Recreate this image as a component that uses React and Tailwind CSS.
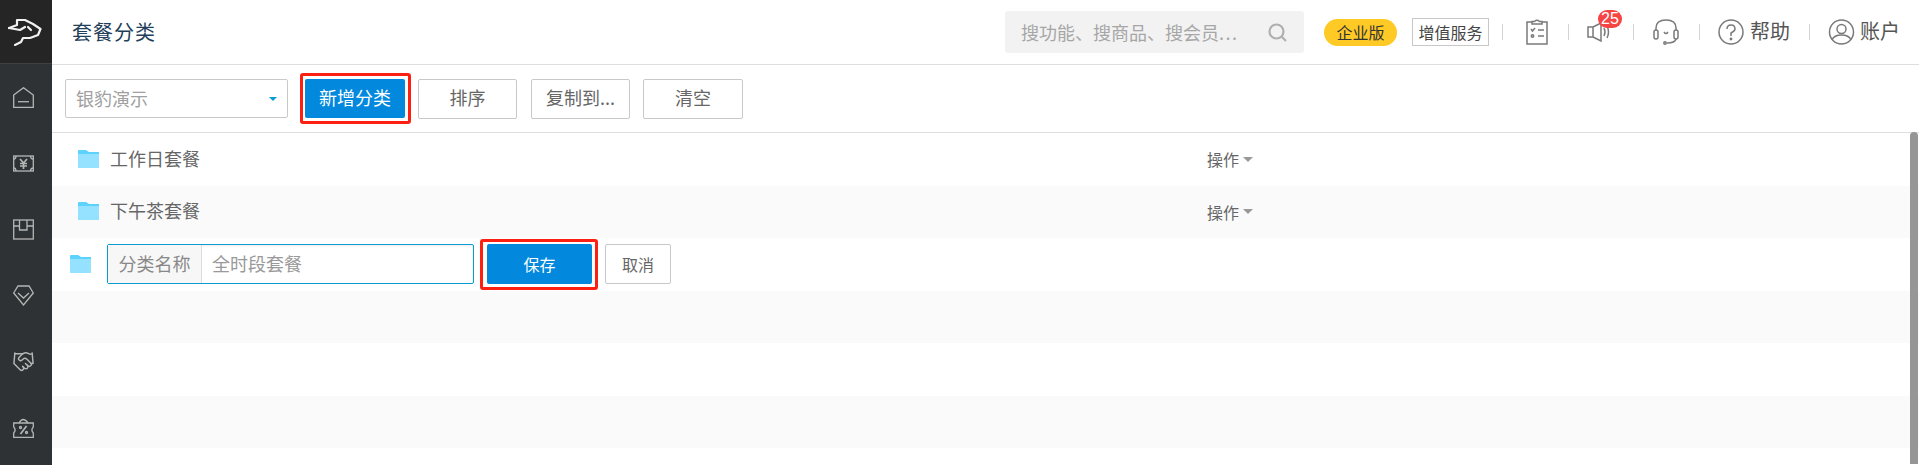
import { Handshake } from 'lucide-react'

const CJK = "font-['Noto_Sans_CJK_SC','Liberation_Sans',sans-serif]"

function Logo() {
  return (
    <svg width="34" height="28" viewBox="0 0 34 28" fill="none" stroke="#f2f2f2" strokeWidth="2.2" strokeLinejoin="round" strokeLinecap="round">
      <path d="M1 10 L9 7 L9 2 L17 2 L25 6 L32.5 11 L30 17 L22 20 L15 20 L13 24 L7 27" />
      <path d="M1 10 L12 12 L17 9" />
      <path d="M20 9 L23 12" />
    </svg>
  )
}

const NAV_ICONS = [
  <g key="home"><path d="M0.7 8 L10.5 0.7 L20.3 8 V20.3 H0.7 Z" /><path d="M5 14.7 H16" /></g>,
  <g key="cash"><rect x="0.7" y="3" width="19.6" height="15" /><path d="M0.7 6 Q3 6 3 3 M17.5 3 Q17.5 6 20.3 6 M0.7 15 Q3 15 3 18 M17.5 18 Q17.5 15 20.3 15" /><path d="M7 6 L10.5 10 L14 6 M7 10.5 H14 M7 13 H14 M10.5 10 V16" strokeWidth="1.7" /></g>,
  <g key="box"><rect x="0.7" y="1" width="19.6" height="19" /><path d="M0.7 7 H6.5 V11 H14 V7 H20.3 M6.5 1 V7 M14 1 V7" /></g>,
  <g key="gem"><path d="M5 1 H16 L20.3 8 L10.5 20 L0.7 8 Z" /><path d="M5 8 L10.5 13 L16 8" /></g>,
  <Handshake key="deal" x="-1" y="-1" width="23" height="23" stroke="#b4b6b6" strokeWidth="1.5" />,
  <g key="coupon"><path d="M0.7 6 H20.3 V10 Q17.5 13 20.3 16 V20.5 H0.7 V16 Q3.5 13 0.7 10 Z" /><path d="M6 6 Q10 -1 15 6" /><path d="M7.5 17 L13.5 9" strokeWidth="1.7" /><circle cx="7.5" cy="10.5" r="1" /><circle cx="13.5" cy="15.5" r="1" /></g>,
]

function Sidebar() {
  return (
    <aside className="w-[52px] shrink-0 bg-[#2f3234] flex flex-col">
      <div className="h-[64px] bg-[#252525] border-b border-[#3d3f40] flex items-center justify-center pr-[2px]">
        <Logo />
      </div>
      <div className="flex flex-col">
        {NAV_ICONS.map((icon, i) => (
          <div key={i} className="h-[66px] flex items-center justify-center pr-[5px]">
            <svg width="21" height="21" viewBox="0 0 21 21" fill="none" stroke="#b4b6b6" strokeWidth="1.3">{icon}</svg>
          </div>
        ))}
      </div>
    </aside>
  )
}

function Sep({ className = '' }) {
  return <span className={`w-px h-4 bg-[#d4d4d4] ${className}`} />
}

function TopBar() {
  return (
    <header className="h-[65px] shrink-0 border-b border-[#dedede] flex items-center pl-[20px] pr-[19px]">
      <h1 className="text-[20px] text-[#1f3f5a] font-normal tracking-[1px]">套餐分类</h1>
      <div className="ml-auto w-[299px] h-[42px] bg-[#f2f2f2] rounded-[3px] flex items-center pl-4 pr-[17px] text-[18px] text-[#a6a6a6]">
        <span className="flex-1">搜功能、搜商品、搜会员<span className="tracking-[1.5px]">...</span></span>
        <svg width="19" height="19" viewBox="0 0 19 19" fill="none" stroke="#b0b0b0" strokeWidth="2.2">
          <circle cx="8.5" cy="8.5" r="7" />
          <path d="M13.5 13.5 L18 18" />
        </svg>
      </div>
      <span className="ml-[20px] w-[73px] h-[27px] rounded-full bg-[#ffc926] text-[16px] text-[#333] flex items-center justify-center">企业版</span>
      <span className="ml-[15px] w-[77px] h-[28px] border border-[#c8c8c8] text-[16px] text-[#444] flex items-center justify-center">增值服务</span>
      <Sep className="ml-[13px]" />
      <svg className="ml-[23px]" width="22" height="26" viewBox="0 0 22 26" fill="none" stroke="#7a7a7a" strokeWidth="1.5">
        <path d="M6 3 H1 V25 H21 V3 H16" />
        <path d="M6 5 V2.5 H8.5 Q11 0 13.5 2.5 H16 V5 Z" />
        <path d="M5 10 L6.5 12 L9 9 M12 11 H18 M12 17 H18" />
        <circle cx="6.5" cy="17" r="1.2" />
      </svg>
      <Sep className="ml-[20px]" />
      <div className="relative ml-[18px] w-[26px] h-[26px] flex items-center">
        <svg width="26" height="20" viewBox="0 0 26 20" fill="none" stroke="#7a7a7a" strokeWidth="1.5">
          <path d="M1 5 H6 V15 H1 Z M6 5 L14 1 V19 L6 15" />
          <path d="M17 6 Q19 10 17 14 M20 4 Q23 10 20 16" />
        </svg>
        <span className="absolute left-[11px] -top-[9px] w-[24px] h-[18px] rounded-full bg-[#f64343] text-white text-[16px] leading-[18px] text-center font-['Liberation_Sans']">25</span>
      </div>
      <Sep className="ml-[20px]" />
      <svg className="ml-[19px]" width="26" height="26" viewBox="0 0 26 26" fill="none" stroke="#7a7a7a" strokeWidth="1.5">
        <path d="M3 11 V9 Q3 1 13 1 Q23 1 23 9 V11" />
        <rect x="1" y="11" width="4" height="9" rx="2" />
        <rect x="21" y="11" width="4" height="9" rx="2" />
        <path d="M23 20 Q22 24 14 24" />
        <path d="M11 13 Q13 16 15 13" />
        <circle cx="12" cy="24" r="1.2" />
      </svg>
      <Sep className="ml-[20px]" />
      <svg className="ml-[18px]" width="26" height="26" viewBox="0 0 26 26" fill="none" stroke="#7a7a7a" strokeWidth="1.5">
        <circle cx="13" cy="13" r="12" />
        <path d="M9 10 Q9 6 13 6 Q17 6 17 10 Q17 12 13 14 V17" />
        <circle cx="13" cy="20" r="0.7" />
      </svg>
      <span className="ml-[6px] -mt-[3px] text-[20px] text-[#555]">帮助</span>
      <Sep className="ml-[19px]" />
      <svg className="ml-[18px]" width="27" height="26" viewBox="0 0 27 26" fill="none" stroke="#7a7a7a" strokeWidth="1.5">
        <circle cx="13.5" cy="13" r="12" />
        <circle cx="13.5" cy="10" r="4.5" />
        <path d="M4 21 Q6 16 13.5 16 Q21 16 23 21" />
      </svg>
      <span className="ml-[5px] -mt-[3px] text-[20px] text-[#555]">账户</span>
    </header>
  )
}

function OutlineBtn({ children, className = '' }) {
  return (
    <button className={`h-[40px] pb-[2px] border border-[#c9c9c9] rounded-[2px] bg-white text-[18px] text-[#666] ${className}`}>
      {children}
    </button>
  )
}

function Toolbar() {
  return (
    <div className="h-[68px] shrink-0 border-b border-[#dedede] flex items-center pl-[13px]">
      <div className="w-[223px] h-[39px] border border-[#c9c9c9] rounded-[2px] flex items-center justify-between pl-[10px] pr-[10px] text-[18px] text-[#a0a0a0]">
        <span>银豹演示</span>
        <span className="w-0 h-0 border-x-[4px] border-x-transparent border-t-[4px] border-t-[#0b9bd3]" />
      </div>
      <div className="ml-[12px] w-[111px] h-[51px] border-[3px] border-[#fb2012] rounded-[3px] flex items-center pl-[2px]">
        <button className="block w-[100px] h-[39px] pb-[2px] rounded-[2px] bg-[#0288dd] text-white text-[18px]">新增分类</button>
      </div>
      <OutlineBtn className="ml-[7px] w-[99px]">排序</OutlineBtn>
      <OutlineBtn className="ml-[14px] w-[99px]">复制到...</OutlineBtn>
      <OutlineBtn className="ml-[13px] w-[100px]">清空</OutlineBtn>
    </div>
  )
}

function Folder() {
  return (
    <svg className="block" width="21" height="18" viewBox="0 0 21 18">
      <path d="M0 1 Q0 0 1 0 H8 L11 2 H21 V5 H0 Z" fill="#5cd3ff" />
      <rect x="0" y="4" width="21" height="14" fill="#94e2ff" />
    </svg>
  )
}

function CategoryRow({ name, shade }) {
  return (
    <div className={`h-[52.5px] shrink-0 flex items-center ${shade ? 'bg-[#fafafa]' : 'bg-white'}`}>
      <span className="ml-[26px] -mt-[1px]"><Folder /></span>
      <span className="ml-[11px] w-[1097px] -mt-[2px] text-[18px] text-[#666]">{name}</span>
      <span className="text-[16px] text-[#666]">操作</span>
      <span className="ml-[4px] w-0 h-0 border-x-[5.5px] border-x-transparent border-t-[5px] border-t-[#999]" />
    </div>
  )
}

function EditRow() {
  return (
    <div className="h-[52.5px] shrink-0 flex items-center bg-white">
      <span className="ml-[18px]"><Folder /></span>
      <div className="ml-[16px] w-[367px] h-[40px] border border-[#0b9bd3] rounded-[2px] flex items-center shadow-[inset_0_1px_3px_rgba(0,0,0,0.08)]">
        <span className="w-[94px] h-full pb-[2px] bg-[#f7f7f7] border-r border-[#dcdcdc] flex items-center justify-center text-[18px] text-[#888]">分类名称</span>
        <span className="pl-[10px] pb-[2px] text-[18px] text-[#999]">全时段套餐</span>
      </div>
      <div className="ml-[6px] w-[118px] h-[51px] border-[3px] border-[#fb2012] rounded-[3px] flex items-center justify-center">
        <button className="block w-[105px] h-[40px] pl-[1px] pb-[1px] rounded-[2px] bg-[#0288dd] text-white text-[16px]">保存</button>
      </div>
      <button className="ml-[7px] w-[66px] h-[40px] pb-[1px] border border-[#c9c9c9] rounded-[2px] bg-white text-[16px] text-[#666]">取消</button>
    </div>
  )
}

export default function App() {
  return (
    <div className={`h-[465px] w-full flex overflow-hidden bg-white ${CJK}`}>
      <Sidebar />
      <main className="relative flex-1 min-w-0 flex flex-col">
        <TopBar />
        <Toolbar />
        <CategoryRow name="工作日套餐" />
        <CategoryRow name="下午茶套餐" shade />
        <EditRow />
        <div className="h-[52.5px] shrink-0 bg-[#fafafa]" />
        <div className="h-[52.5px] shrink-0 bg-white" />
        <div className="h-[52.5px] shrink-0 bg-[#fafafa]" />
        <span className="absolute right-[1px] top-[132px] bottom-[1px] w-[8px] rounded-t-full bg-[#969696]" />
      </main>
    </div>
  )
}
